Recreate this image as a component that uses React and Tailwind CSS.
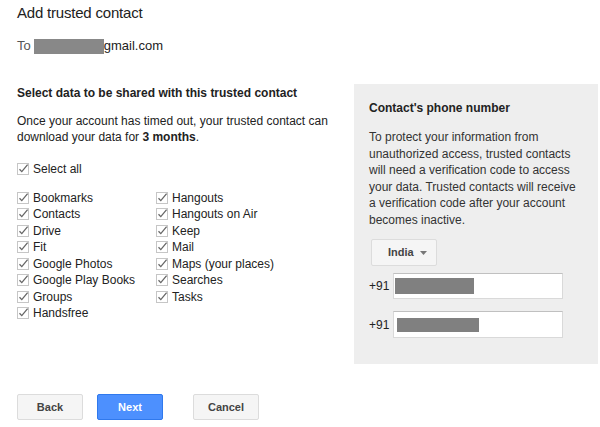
import React from "react";

const LEFT = ["Bookmarks", "Contacts", "Drive", "Fit", "Google Photos", "Google Play Books", "Groups", "Handsfree"];
const RIGHT = ["Hangouts", "Hangouts on Air", "Keep", "Mail", "Maps (your places)", "Searches", "Tasks"];

function Check({ label }) {
  return (
    <div className="flex items-center h-[16.5px]">
      <svg width="12" height="12" viewBox="0 0 12 12" className="mr-[4px] shrink-0">
        <rect x="0.5" y="0.5" width="11" height="11" fill="#fff" stroke="#c6c6c6" />
        <path d="M2.5 6.2 L4.8 8.6 L10.6 1.6" fill="none" stroke="#666" strokeWidth="1.3" />
      </svg>
      <span className="whitespace-nowrap">{label}</span>
    </div>
  );
}

export default function App() {
  return (
    <div className="w-[600px] h-[427px] bg-white text-[#222] text-[12px] overflow-hidden" style={{ fontFamily: '"Liberation Sans", Arial, sans-serif' }}>
      <div className="pl-[17px]">
        <h1 className="pt-[3px] text-[15px] leading-[20px] font-normal tracking-[-0.2px]">Add trusted contact</h1>

        <div className="mt-[15px] flex items-center h-[16px] text-[13px] text-[#222]">
          <span className="text-[#555]">To</span>
          <span className="ml-[3px] w-[70px] h-[15px] bg-[#888]"></span>
          <span>gmail.com</span>
        </div>

        {/* main row */}
        <div className="mt-[30px] flex">
          <div className="w-[337px] shrink-0">
            <h2 className="pt-[1px] font-bold leading-[16px]">Select data to be shared with this trusted contact</h2>
            <p className="mt-[12px] leading-[16px]">
              Once your account has timed out, your trusted contact can
              <br />
              download your data for <b>3 months</b>.
            </p>
            <div className="mt-[16px]">
              <Check label="Select all" />
            </div>
            <div className="mt-[12px] flex">
              <div className="w-[139px]">
                {LEFT.map((l) => (
                  <Check key={l} label={l} />
                ))}
              </div>
              <div>
                {RIGHT.map((l) => (
                  <Check key={l} label={l} />
                ))}
              </div>
            </div>
          </div>

          <div className="w-[244px] h-[280px] bg-[#eeeeee] px-[15px] pt-[16px]">
            <h3 className="font-bold leading-[16px]">Contact's phone number</h3>
            <p className="mt-[13px] leading-[16.5px] text-[#333]">
              To protect your information from
              <br />
              unauthorized access, trusted contacts
              <br />
              will need a verification code to access
              <br />
              your data. Trusted contacts will receive
              <br />
              a verification code after your account
              <br />
              becomes inactive.
            </p>
            <div className="mt-[11px] ml-[2px] w-[66px] h-[27px] flex items-center justify-between pl-[16px] pr-[9px] bg-[#f5f5f5] border border-[#dcdcdc] rounded-[2px]">
              <span className="text-[11px] font-bold text-[#444]">India</span>
              <svg width="7" height="4" viewBox="0 0 7 4">
                <path d="M0 0 L7 0 L3.5 4 Z" fill="#777" />
              </svg>
            </div>
            <div className="mt-[7px] flex items-center">
              <span className="w-[24px]">+91</span>
              <div className="w-[170px] h-[26px] bg-white border border-[#d9d9d9] border-t-[#c0c0c0] flex items-center">
                <span className="ml-[1px] w-[79px] h-[16px] bg-[#808080]"></span>
              </div>
            </div>
            <div className="mt-[12px] flex items-center">
              <span className="w-[24px]">+91</span>
              <div className="w-[170px] h-[27px] bg-white border border-[#d9d9d9] border-t-[#c0c0c0] flex items-center">
                <span className="ml-[3px] w-[82px] h-[14px] bg-[#808080]"></span>
              </div>
            </div>
          </div>
        </div>

        {/* buttons */}
        <div className="mt-[30px] flex items-center">
          <button className="w-[66px] h-[26px] bg-[#f5f5f5] border border-[#dcdcdc] rounded-[2px] text-[11px] font-bold text-[#444]">Back</button>
          <button className="ml-[14px] w-[66px] h-[26px] bg-[#4d90fe] border border-[#3079ed] rounded-[2px] text-[11px] font-bold text-white">Next</button>
          <button className="ml-[30px] w-[66px] h-[26px] bg-[#f5f5f5] border border-[#dcdcdc] rounded-[2px] text-[11px] font-bold text-[#444]">Cancel</button>
        </div>
      </div>
    </div>
  );
}
